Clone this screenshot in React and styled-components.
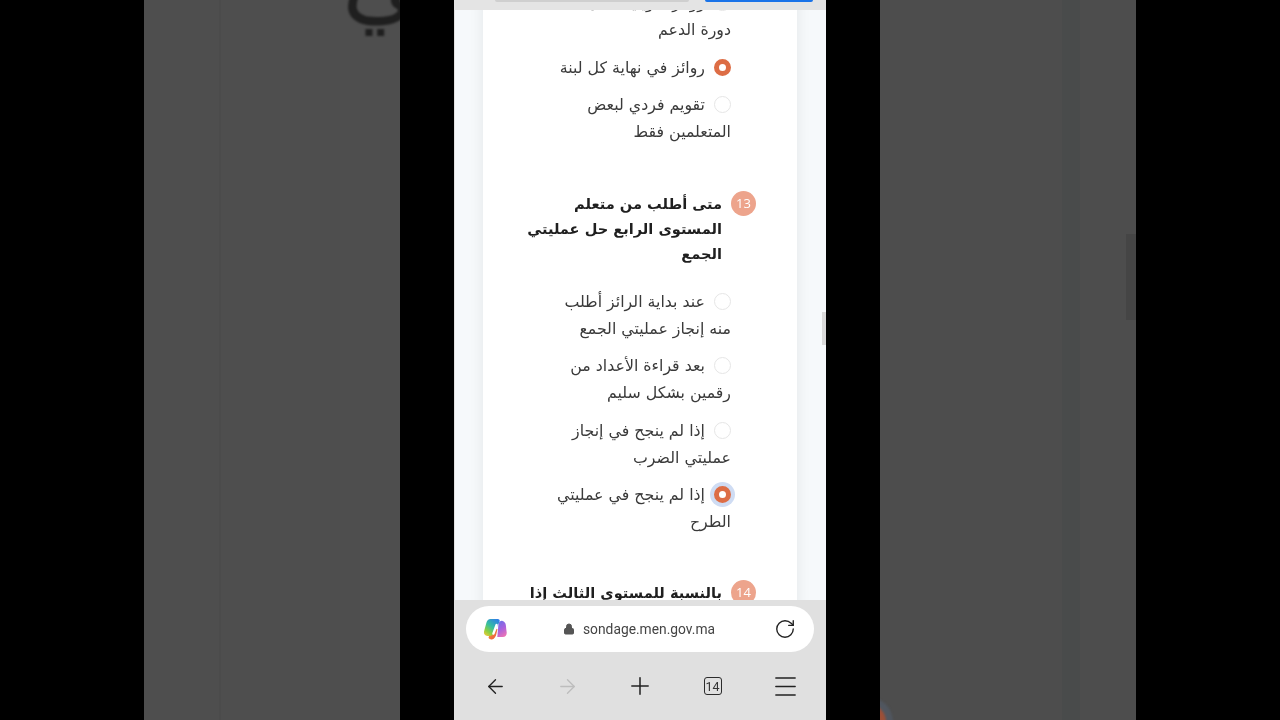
import React from "react";
import styled, { createGlobalStyle } from "styled-components";
import { Lock, RotateCw, ArrowLeft, ArrowRight, Plus, Menu } from "lucide-react";

const Global = createGlobalStyle`
  html, body { margin: 0; padding: 0; background: #000; }
  * { box-sizing: border-box; }
`;

const Stage = styled.div`
  width: 1280px;
  height: 720px;
  background: #000;
  display: flex;
  justify-content: center;
  gap: 54px;
  overflow: hidden;
  font-family: "DejaVu Sans", "Noto Sans", sans-serif;
`;

const SidePanel = styled.div`
  position: relative;
  width: 256px;
  height: 720px;
  overflow: hidden;
  background: ${(p) =>
    p.$right
      ? "linear-gradient(90deg, #4d4d4d 0, #4d4d4d 182px, #494b4b 182px, #494b4b 200px, #4d4d4d 200px)"
      : "linear-gradient(90deg, #4e4e4e 0, #4e4e4e 75px, #4b4b4b 75px, #4b4b4b 77px, #4e4e4e 77px)"};
`;

const BlurredGlyph = styled.div`
  position: absolute;
  top: -85px;
  left: 198px;
  font-size: 96px;
  line-height: 130px;
  color: #1f1f1f;
  filter: blur(1px);
  white-space: nowrap;
`;

const SideScrollbar = styled.div`
  position: absolute;
  top: 234px;
  right: 0;
  width: 10px;
  height: 86px;
  background: #454545;
`;

const BlurredRadio = styled.div`
  position: absolute;
  left: -30px;
  top: 704px;
  width: 36px;
  height: 36px;
  border-radius: 50%;
  background: #9c4f37;
  box-shadow: 0 0 0 7px #50565f;
  filter: blur(1.2px);
`;

const Phone = styled.div`
  position: relative;
  width: 372px;
  height: 720px;
  display: flex;
  flex-direction: column;
  background: #f6f9fb;
  overflow: hidden;
  filter: blur(0.3px);
`;

const TopBar = styled.div`
  height: 10px;
  flex: none;
  background: #e4e4e4;
  padding: 0 13px 0 41px;
  display: flex;
  gap: 16px;
  z-index: 1;
`;

const TopField = styled.div`
  width: 195px;
  height: 2px;
  background: #cfcfcf;
  border-radius: 0 0 3px 3px;
`;

const TopButton = styled.div`
  width: 108px;
  height: 2px;
  background: #1a73e8;
  border-radius: 0 0 4px 4px;
`;

const Viewport = styled.div`
  flex: 1;
  min-height: 0;
  overflow: hidden;
  padding: 0 29px;
  box-shadow: inset 1px 0 0 #e2e2e2;
`;

const Card = styled.div`
  width: 314px;
  margin-top: -21px;
  padding: 0 66px 0 20px;
  background: #fff;
  box-shadow: 0 0 14px rgba(0, 0, 0, 0.08);
  direction: rtl;
  color: #3a3a3a;
`;

const Option = styled.div`
  font-size: 15.8px;
  line-height: 27px;
  white-space: nowrap;
  margin-bottom: 10.5px;
`;

const Radio = styled.span`
  display: inline-block;
  width: 17px;
  height: 17px;
  border-radius: 50%;
  margin-left: 9px;
  vertical-align: -3px;
  background: #fff;
  border: ${(p) => (p.$checked ? "5px solid #dd6d45" : "1px solid #e6e6e6")};
  box-shadow: ${(p) => (p.$focus ? "0 0 0 4px #cfdcf3" : "none")};
`;

const Question = styled.div`
  display: flex;
  align-items: flex-start;
  margin-right: -25px;
  margin-bottom: ${(p) => p.$gap || 0}px;
`;

const QuestionNumber = styled.span`
  flex: none;
  width: 25px;
  height: 25px;
  margin-left: 9px;
  border-radius: 50%;
  background: #eda48c;
  color: #fff;
  font-family: "Open Sans", sans-serif;
  font-size: 13px;
  line-height: 25px;
  text-align: center;
`;

const QuestionText = styled.div`
  font-size: 14.6px;
  font-weight: 700;
  line-height: 25px;
  color: #1f1f1f;
  white-space: nowrap;
`;

const Spacer = styled.div`
  height: ${(p) => p.$h}px;
`;

const BottomBar = styled.div`
  height: 120px;
  flex: none;
  background: #e0e0e0;
  padding: 6px 12px 0;
  z-index: 1;
`;

const UrlPill = styled.div`
  height: 46px;
  border-radius: 23px;
  background: #fff;
  display: flex;
  align-items: center;
  justify-content: space-between;
  padding: 0 18px 0 17px;
`;

const UrlText = styled.div`
  display: flex;
  align-items: center;
  gap: 8px;
  margin-right: 3px;
  font-family: Roboto, "Open Sans", sans-serif;
  font-size: 13.8px;
  color: #444;
`;

const NavRow = styled.div`
  display: flex;
  justify-content: space-between;
  align-items: center;
  padding: 0 17px;
  margin-top: 20px;
  height: 28px;
`;

const NavSlot = styled.div`
  width: 24px;
  height: 24px;
  display: flex;
  align-items: center;
  justify-content: center;
  color: ${(p) => (p.$off ? "#bdbdbd" : "#222")};

  svg {
    flex: none;
  }
`;

const TabCount = styled.span`
  flex: none;
  width: 18px;
  height: 18px;
  border: 1.6px solid #2c2c2c;
  border-radius: 3px;
  display: flex;
  align-items: center;
  justify-content: center;
  font-family: Roboto, sans-serif;
  font-size: 12.5px;
  color: #333;
`;

const PageScrollbar = styled.div`
  position: absolute;
  top: 312px;
  right: 0;
  width: 4px;
  height: 33px;
  background: #d9d9d9;
`;

const CopilotLogo = () => (
  <svg width="24" height="24" viewBox="0 0 24 24">
    <defs>
      <linearGradient id="cpLeft" x1="0.8" y1="0" x2="0.1" y2="1">
        <stop offset="0" stopColor="#2f7fe6" />
        <stop offset="0.45" stopColor="#35bfa0" />
        <stop offset="0.75" stopColor="#8ccf42" />
        <stop offset="1" stopColor="#f0c93a" />
      </linearGradient>
      <linearGradient id="cpRight" x1="0.3" y1="0" x2="0.7" y2="1">
        <stop offset="0" stopColor="#6f6fe8" />
        <stop offset="0.5" stopColor="#ab62dd" />
        <stop offset="1" stopColor="#ee74b4" />
      </linearGradient>
      <linearGradient id="cpBottom" x1="0" y1="0" x2="1" y2="1">
        <stop offset="0" stopColor="#f7a23c" />
        <stop offset="1" stopColor="#e9503f" />
      </linearGradient>
    </defs>
    <path
      d="M15.5 6.5c1-2 2.2-3 4-2.6 1.9.5 3 2 3.3 4l.9 7.6c.3 2.6-1.4 4.5-3.9 4.5h-5.5z"
      fill="url(#cpRight)"
    />
    <path
      d="M8 12h6.5l-.9 4c-.7 3.5-2 6-4.6 6.4-1.5.2-2.8-.4-3.5-1.6z"
      fill="url(#cpBottom)"
    />
    <path
      d="M7.5 2h7.2c1.6 0 2.3 1.2 1.9 2.6L13 12c-1 3-2.4 6-5.5 7H4.4C2 19 .5 17 1 14.6L3.4 5.8C4 3.6 5.5 2 7.5 2z"
      fill="url(#cpLeft)"
    />
    <path d="M10.4 16.6 13.6 8" stroke="#fff" strokeWidth="2.4" strokeLinecap="round" />
  </svg>
);

export default function App() {
  return (
    <Stage>
      <Global />
      <SidePanel>
        <BlurredGlyph>عمليتي</BlurredGlyph>
      </SidePanel>
      <Phone>
        <TopBar>
          <TopField />
          <TopButton />
        </TopBar>
        <Viewport>
          <Card>
            <Option>
              <Radio />
              روائز تكوينية خلال
              <br />
              دورة الدعم
            </Option>
            <Option>
              <Radio $checked />
              روائز في نهاية كل لبنة
            </Option>
            <Option>
              <Radio />
              تقويم فردي لبعض
              <br />
              المتعلمين فقط
            </Option>
            <Spacer $h={35} />
            <Question $gap={22}>
              <QuestionNumber>13</QuestionNumber>
              <QuestionText>
                متى أطلب من متعلم
                <br />
                المستوى الرابع حل عمليتي
                <br />
                الجمع
              </QuestionText>
            </Question>
            <Option>
              <Radio />
              عند بداية الرائز أطلب
              <br />
              منه إنجاز عمليتي الجمع
            </Option>
            <Option>
              <Radio />
              بعد قراءة الأعداد من
              <br />
              رقمين بشكل سليم
            </Option>
            <Option>
              <Radio />
              إذا لم ينجح في إنجاز
              <br />
              عمليتي الضرب
            </Option>
            <Option>
              <Radio $checked $focus />
              إذا لم ينجح في عمليتي
              <br />
              الطرح
            </Option>
            <Spacer $h={34} />
            <Question>
              <QuestionNumber>14</QuestionNumber>
              <QuestionText>بالنسبة للمستوى الثالث إذا</QuestionText>
            </Question>
            <Spacer $h={60} />
          </Card>
        </Viewport>
        <BottomBar>
          <UrlPill>
            <CopilotLogo />
            <UrlText>
              <Lock size={12} fill="#555" color="#555" />
              sondage.men.gov.ma
            </UrlText>
            <RotateCw size={22} color="#222" strokeWidth={1.5} />
          </UrlPill>
          <NavRow>
            <NavSlot>
              <ArrowLeft size={23} strokeWidth={1.4} />
            </NavSlot>
            <NavSlot $off>
              <ArrowRight size={23} strokeWidth={1.4} />
            </NavSlot>
            <NavSlot>
              <Plus size={28} strokeWidth={1.3} />
            </NavSlot>
            <NavSlot>
              <TabCount>14</TabCount>
            </NavSlot>
            <NavSlot>
              <Menu size={29} strokeWidth={1.2} />
            </NavSlot>
          </NavRow>
        </BottomBar>
        <PageScrollbar />
      </Phone>
      <SidePanel $right>
        <SideScrollbar />
        <BlurredRadio />
      </SidePanel>
    </Stage>
  );
}
